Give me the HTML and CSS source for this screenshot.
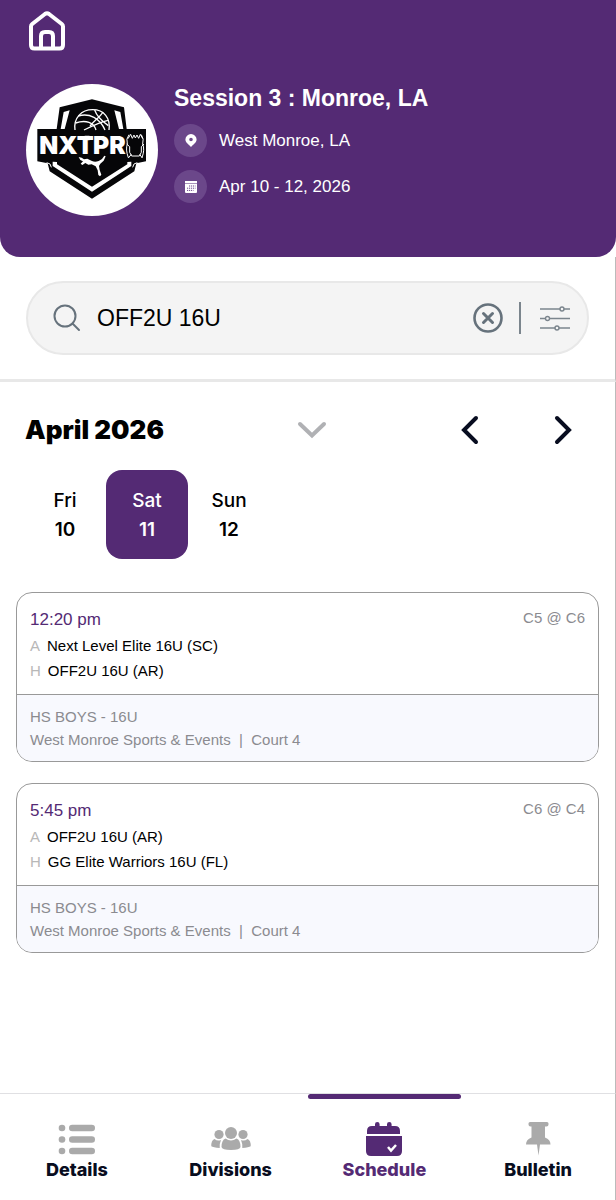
FILE: index.html
```html
<!DOCTYPE html>
<html lang="en">
<head>
<meta charset="UTF-8">
<meta name="viewport" content="width=device-width, initial-scale=1.0">
<title>Session 3 : Monroe, LA</title>
<link rel="stylesheet" href="styles.css">
</head>
<body>

<!-- Event Header -->
<header class="header">
    <a href="#" class="home-link" aria-label="Home">
        <svg width="38" height="40" viewBox="0 0 38 40" fill="none" stroke="#fff" stroke-width="4" stroke-linejoin="round">
            <path d="M3 15.500Q3 14 4.200 13L17 3Q19 1.600 21 3L33.800 13Q35 14 35 15.500V34Q35 37.500 31.500 37.500H6.500Q3 37.500 3 34Z"/>
            <path d="M13 37V25Q13 21 17 21H21Q25 21 25 25V37"/>
        </svg>
    </a>
    <div class="event">
        <div class="event-logo">
            <svg viewBox="0 0 396 396" role="img" aria-label="NXTPRO Puma">
                <path fill="#060608" d="M198 46L294 70L302 135H360V232L331 238L325 262L198 344L71 262L65 238L34 232V135H92L101 70Z"/>
                <path fill="#fff" d="M113 84L131 79L116 135H104ZM283 84L265 79L279 135H292Z"/>
                <path fill="#fff" d="M80 233L93 234V241L198 308L304 241V234L316 233V246L198 323L80 246Z"/>
                <path fill="none" stroke="#fff" stroke-width="3" d="M62 236L72 240L76 250M334 236L324 240L320 250"/>
                <g fill="none" stroke="#fff" stroke-width="4">
                    <path d="M147 138C142 102 166 77 200 77C234 77 254 102 249 138"/>
                    <path d="M157 96C190 86 222 103 237 138M149 117C180 106 204 116 210 138"/>
                    <path d="M174 138C198 126 222 114 246 109M206 78C211 93 227 111 247 125M231 84C225 96 207 108 192 126"/>
                </g>
                <text class="logo-text" x="40" y="209">NXT</text>
                <text class="logo-text" x="201" y="209">PR</text>
                <path fill="#fff" d="M176 155H190L200 162L190 169H176Z"/>
                <g fill="none" stroke="#fff" stroke-width="3">
                    <path d="M309 152Q299 165 304 180Q298 196 307 221M346 152Q355 165 350 180Q357 197 348 221"/>
                    <path d="M306 164L314 151L319 163L324 153L328 162L333 153L338 163L343 151L350 164M302 180L311 188V205L317 216H340L346 205V188L354 180M307 222L316 211M341 211L349 222"/>
                </g>
                <path fill="#fff" d="M158 219L167 221L174 226L184 224L198 231Q207 236 218 231L228 225L235 215L239 217L233 230L223 239L219 246L221 258L226 272L222 277L217 273L215 259L209 247L197 241L187 242L178 237L169 243L164 239L171 232L163 228Z"/>
            </svg>
        </div>
        <div class="event-info">
            <h1>Session 3 : Monroe, LA</h1>
            <div class="event-row">
                <span class="event-icon">
                    <svg width="12" height="13" viewBox="0 0 12 13"><path fill="#fff" fill-rule="evenodd" d="M6 0A5.600 5.600 0 0 1 11.600 5.600C11.600 8.700 8.500 10.300 6 13C3.500 10.300.4 8.700.4 5.600A5.600 5.600 0 0 1 6 0ZM6 3.700A1.800 1.800 0 1 0 6 7.300A1.800 1.800 0 0 0 6 3.700Z"/></svg>
                </span>
                <span>West Monroe, LA</span>
            </div>
            <div class="event-row">
                <span class="event-icon">
                    <svg width="12" height="12" viewBox="0 0 12 12">
                        <path fill="#fff" d="M0 0H12V11Q12 12 11 12H1Q0 12 0 11Z"/>
                        <path stroke="#6b478a" stroke-width=".6" d="M0 2.500H12"/>
                        <path stroke="#6b478a" stroke-dasharray="1.200 .8" d="M4 5H10.500M2 7.200H10.500M2 9.400H8.500"/>
                    </svg>
                </span>
                <span>Apr 10 - 12, 2026</span>
            </div>
        </div>
    </div>
</header>

<!-- Search -->
<form class="search" role="search">
    <div class="search-box">
        <label for="teamSearch" class="search-icon" aria-label="Search teams">
            <svg width="28" height="28" viewBox="0 0 28 28" fill="none" stroke="#66727c" stroke-width="2" stroke-linecap="round">
                <circle cx="12" cy="12" r="10.500"/>
                <path d="M19.500 19.500L26 26"/>
            </svg>
        </label>
        <input type="text" id="teamSearch" value="OFF2U 16U">
        <button type="button" class="clear-btn" aria-label="Clear search">
            <svg width="30" height="30" viewBox="0 0 30 30" fill="none" stroke="#66727c" stroke-linecap="round">
                <circle cx="15" cy="15" r="13.500" stroke-width="2.600"/>
                <path stroke-width="3" d="M10.500 10.500L19.500 19.500M19.500 10.500L10.500 19.500"/>
            </svg>
        </button>
        <button type="button" class="filter-btn" aria-label="Filters">
            <svg width="32" height="26" viewBox="0 0 32 26" fill="#f4f4f4" stroke="#7b858d" stroke-width="1.400">
                <path d="M1 4H31M1 13.500H31M1 23H31"/>
                <circle cx="23" cy="4" r="2"/>
                <circle cx="8.500" cy="13.500" r="2"/>
                <circle cx="18" cy="23" r="2"/>
            </svg>
        </button>
    </div>
</form>

<!-- Schedule -->
<main class="schedule">
    <div class="month">
        <h2>April 2026</h2>
        <button type="button" class="month-toggle" aria-label="Choose month">
            <svg width="30" height="18" viewBox="0 0 30 18" fill="none" stroke="#b0b1b4" stroke-width="4" stroke-linecap="round"><path d="M3 3L15 14.500L27 3"/></svg>
        </button>
        <div class="month-nav">
            <button type="button" aria-label="Previous week">
                <svg width="18" height="30" viewBox="0 0 18 30" fill="none" stroke="#080d20" stroke-width="4" stroke-linecap="round"><path d="M15 3L3 15L15 27"/></svg>
            </button>
            <button type="button" aria-label="Next week">
                <svg width="18" height="30" viewBox="0 0 18 30" fill="none" stroke="#080d20" stroke-width="4" stroke-linecap="round"><path d="M3 3L15 15L3 27"/></svg>
            </button>
        </div>
    </div>

    <div class="days">
        <button type="button" class="day">Fri<b>10</b></button>
        <button type="button" class="day active">Sat<b>11</b></button>
        <button type="button" class="day">Sun<b>12</b></button>
    </div>

    <div class="games">
        <article class="game">
            <div class="game-top">
                <div>
                    <h3>12:20 pm</h3>
                    <p class="team"><span>A</span>Next Level Elite 16U (SC)</p>
                    <p class="team"><span>H</span>OFF2U 16U (AR)</p>
                </div>
                <span class="seed">C5 @ C6</span>
            </div>
            <div class="game-bottom">
                <p>HS BOYS - 16U</p>
                <p>West Monroe Sports &amp; Events &nbsp;|&nbsp; Court 4</p>
            </div>
        </article>

        <article class="game">
            <div class="game-top">
                <div>
                    <h3>5:45 pm</h3>
                    <p class="team"><span>A</span>OFF2U 16U (AR)</p>
                    <p class="team"><span>H</span>GG Elite Warriors 16U (FL)</p>
                </div>
                <span class="seed">C6 @ C4</span>
            </div>
            <div class="game-bottom">
                <p>HS BOYS - 16U</p>
                <p>West Monroe Sports &amp; Events &nbsp;|&nbsp; Court 4</p>
            </div>
        </article>
    </div>
</main>

<!-- Bottom Tabs -->
<nav class="tabs">
    <a href="#" class="tab">
        <svg width="40" height="36" viewBox="0 0 40 36" fill="#aaa">
            <circle cx="5" cy="6" r="3.300"/><circle cx="5" cy="17.500" r="3.300"/><circle cx="5" cy="29" r="3.300"/>
            <rect x="12" y="2.700" width="26" height="6.600" rx="3.300"/><rect x="12" y="14.200" width="26" height="6.600" rx="3.300"/><rect x="12" y="25.700" width="26" height="6.600" rx="3.300"/>
        </svg>
        Details
    </a>
    <a href="#" class="tab">
        <svg width="40" height="36" viewBox="0 0 40 36" fill="#aaa">
            <circle cx="20" cy="11" r="6"/><circle cx="8" cy="12.500" r="4.600"/><circle cx="32" cy="12.500" r="4.600"/>
            <path d="M14.500 16.500Q20 20.500 25.500 16.500Q29.500 18 29.500 25Q29 28 20 28Q11 28 10.500 25Q10.500 18 14.500 16.500Z"/>
            <path d="M3.500 17Q6.500 19.500 10 18Q8.500 21 8.700 26Q2 25.500.3 24.300Q0 18.500 3.500 17ZM36.500 17Q33.500 19.500 30 18Q31.500 21 31.300 26Q38 25.500 39.700 24.300Q40 18.500 36.500 17Z"/>
        </svg>
        Divisions
    </a>
    <a href="#" class="tab active" aria-current="page">
        <svg width="40" height="36" viewBox="0 0 40 36" fill="#542a74">
            <path d="M3 12V9Q3 4 8 4H11V2.300A2.300 2.300 0 0 1 15.600 2.300V4H23V2.300A2.300 2.300 0 0 1 27.600 2.300V4H31Q36 4 36 9V12Z"/>
            <path d="M2 14H38V29Q38 34 33 34H7Q2 34 2 29Z"/>
            <path fill="none" stroke="#fff" stroke-width="2.500" d="M24 25L27 28.500L32 23"/>
        </svg>
        Schedule
    </a>
    <a href="#" class="tab">
        <svg width="40" height="36" viewBox="0 0 40 36" fill="#aaa">
            <path d="M12 0H29Q30.500 0 30.500 1.500V2.500Q30.500 4.500 28.500 4.500H27V15.500Q32.500 17.500 32.500 22.500H22L20.500 33.500L19 22.500H8Q8 17.500 13.500 15.500V4.500H12.500Q10.500 4.500 10.500 2.500V1.500Q10.500 0 12 0Z"/>
        </svg>
        Bulletin
    </a>
</nav>

</body>
</html>
```
FILE: styles.css
```css
/* General Styles */
* {
    margin: 0;
    padding: 0;
    box-sizing: border-box;
}

body {
    display: flex;
    flex-direction: column;
    min-height: 100vh;
    background: #fff;
    color: #000;
    font-family: "Liberation Sans", Arial, sans-serif;
    font-size: 15px;
}

button {
    background: none;
    border: none;
    font: inherit;
    color: inherit;
    cursor: pointer;
}

a {
    color: inherit;
    text-decoration: none;
}

svg {
    display: block;
}

/* Event Header */
.header {
    background: #542a74;
    color: #fff;
    padding: 11px 26px 41px;
    border-radius: 0 0 20px 20px;
}

.home-link {
    display: inline-block;
    margin-left: 2px;
}

.event {
    display: flex;
    gap: 16px;
    margin-top: 30px;
}

.event-logo {
    flex: none;
    width: 132px;
    height: 132px;
    background: #fff;
    border-radius: 50%;
}

.logo-text {
    font-family: Inter, sans-serif;
    font-weight: 900;
    font-size: 74px;
    fill: #fff;
}

.event-info h1 {
    font-size: 23px;
    line-height: 28px;
    margin-bottom: 12px;
}

.event-row {
    display: flex;
    align-items: center;
    gap: 12px;
    margin-bottom: 13px;
    font-size: 17px;
}

.event-icon {
    display: flex;
    align-items: center;
    justify-content: center;
    width: 33px;
    height: 33px;
    border-radius: 50%;
    background: #6b478a;
}

/* Thin edge down the right side, below the header */
.search, .schedule, .tabs {
    border-right: 1px solid #bbb;
}

/* Search */
.search {
    padding: 24px 26px;
    border-bottom: 3px solid #e8e8e8;
}

.search-box {
    display: flex;
    align-items: center;
    height: 74px;
    padding: 0 16px 0 25px;
    background: #f4f4f4;
    border: 2px solid #e8e8e8;
    border-radius: 37px;
}

.search-box input {
    flex: 1;
    min-width: 0;
    margin-left: 16px;
    background: none;
    border: none;
    outline: none;
    color: #000;
    font-family: inherit;
    font-size: 23px;
}

.filter-btn {
    margin-left: 16px;
    padding: 3px 0 3px 18px;
    border-left: 2px solid #7b858d;
}

/* Month */
.schedule {
    flex: 1;
    padding: 28px 16px;
}

.month {
    display: flex;
    align-items: center;
    justify-content: space-between;
    padding: 0 27px 0 9px;
}

.month h2 {
    font-family: Inter, sans-serif;
    font-weight: 900;
    font-size: 26px;
    line-height: 40px;
}

.month-nav {
    display: flex;
    gap: 75px;
}

/* Days */
.days {
    display: flex;
    margin: 20px 8px 33px;
}

.day {
    width: 82px;
    height: 89px;
    border-radius: 16px;
    font-family: Inter, sans-serif;
    font-weight: 500;
    font-size: 19px;
    line-height: 29px;
}

.day b {
    display: block;
    font-weight: 600;
}

.day.active {
    background: #542a74;
    color: #fff;
}

/* Games */
.games {
    display: flex;
    flex-direction: column;
    gap: 21px;
}

.game {
    border: 1px solid #999;
    border-radius: 16px;
    overflow: hidden;
}

.game-top {
    display: flex;
    justify-content: space-between;
    padding: 14px 13px 11px;
}

.game h3 {
    color: #542a74;
    font-weight: normal;
    font-size: 17px;
    line-height: 26px;
}

.team {
    line-height: 25px;
}

.team span {
    margin-right: 7px;
    color: #b8b8b8;
}

.seed {
    color: #8b8b90;
    line-height: 22px;
}

.game-bottom {
    padding: 10px 13px;
    background: #f8f9fe;
    border-top: 1px solid #999;
    color: #8b8b90;
    line-height: 23px;
}

/* Bottom Tabs */
.tabs {
    display: flex;
    border-top: 1px solid #e0e0e3;
}

.tab {
    position: relative;
    flex: 1;
    display: flex;
    flex-direction: column;
    align-items: center;
    gap: 1px;
    padding: 28px 0 19px;
    color: #080d20;
    font-family: Inter, sans-serif;
    font-weight: 800;
    font-size: 18px;
    line-height: 22px;
}

.tab.active {
    color: #542a74;
}

/* Bar over the current tab */
.tab.active::before {
    content: "";
    position: absolute;
    top: 0;
    left: 0;
    width: 100%;
    height: 5px;
    border-radius: 3px;
    background: #542a74;
}
```
